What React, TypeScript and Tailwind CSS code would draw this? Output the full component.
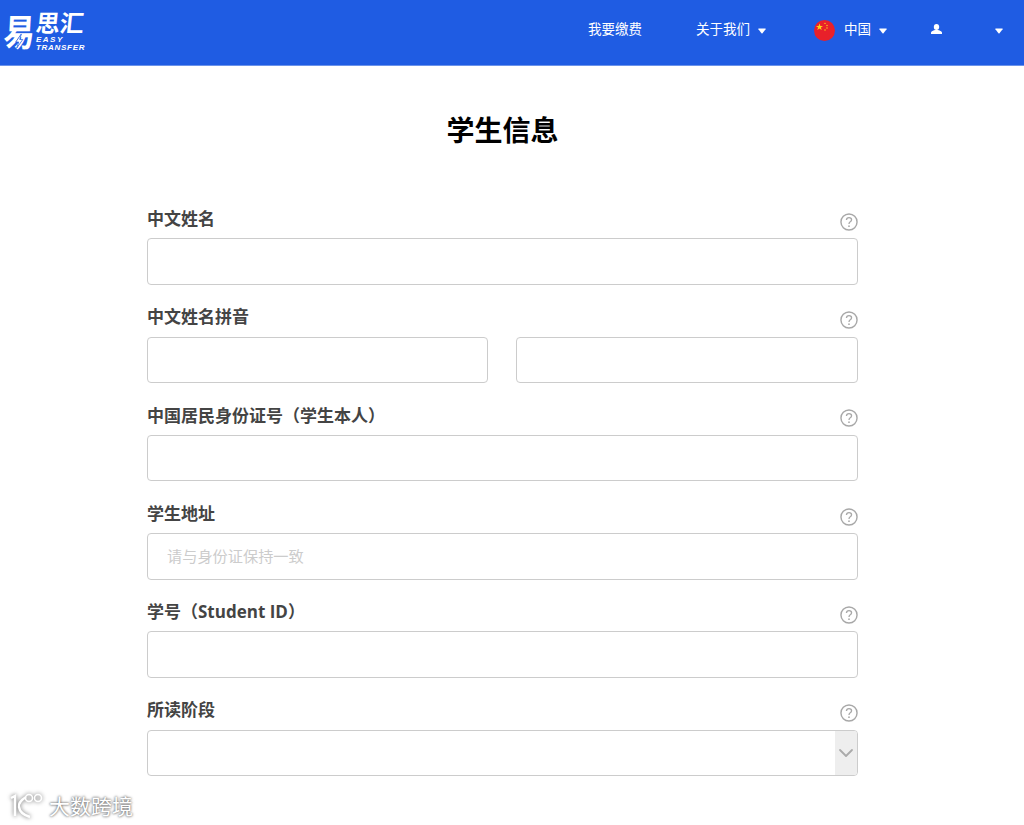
import React from "react";
import { ChevronDown } from "lucide-react";

const cjk = "font-['Open_Sans','Noto_Sans_CJK_SC','Noto_Sans',sans-serif]";

function Caret({ className = "" }: { className?: string }) {
  return (
    <svg width="8" height="6" viewBox="0 0 8 6" className={className}>
      <path d="M0.6 0.6 H7.4 Q7.9 0.6 7.6 1.2 L4.5 5.3 Q4 5.8 3.5 5.3 L0.4 1.2 Q0.1 0.6 0.6 0.6 Z" fill="#fff" />
    </svg>
  );
}

function Logo() {
  return (
    <div className="flex items-start ml-[5px] mt-[-2px] text-white font-bold">
      <div className="relative w-[31px] h-[38px] text-[31px] leading-[34px] origin-top skew-x-[-4deg] scale-y-[1.2]">
        易
        {/* bolt */}
        <svg width="10" height="12" viewBox="0 0 10 14" className="absolute left-[11px] top-[19px]">
          <path d="M7 0 L1 8 H4.5 L2.5 14 L9 5.5 H5.5 Z" fill="#fff" stroke="#1f5ce3" strokeWidth="0.8" />
        </svg>
      </div>
      <div className="flex flex-col">
        <div className="text-[24px] leading-[24px] skew-x-[-6deg]">思汇</div>
        <div className="italic font-['Liberation_Sans',sans-serif] text-[8px] leading-[8px] mt-[1.5px] tracking-[1.5px]">EASY</div>
        <div className="italic font-['Liberation_Sans',sans-serif] text-[8px] leading-[8px] tracking-[0.7px]">TRANSFER</div>
      </div>
    </div>
  );
}

function Flag() {
  return (
    <svg width="21" height="21" viewBox="0 0 21 21">
      <circle cx="10.5" cy="10.5" r="10.5" fill="#e8202a" />
      <path d="M5.5 3.5 L6.4 6 L9 6 L6.9 7.6 L7.7 10 L5.5 8.6 L3.3 10 L4.1 7.6 L2 6 L4.6 6 Z" fill="#fbd516" />
      <circle cx="11" cy="3.4" r="0.7" fill="#fbd516" />
      <circle cx="13" cy="5.5" r="0.7" fill="#fbd516" />
      <circle cx="13" cy="8" r="0.7" fill="#fbd516" />
      <circle cx="11" cy="10" r="0.7" fill="#fbd516" />
    </svg>
  );
}

function UserIcon() {
  return (
    <svg width="11" height="10" viewBox="0 0 11 10">
      <ellipse cx="5.5" cy="3" rx="2.7" ry="3" fill="#fff" />
      <path d="M0 10 V8.6 Q0 7.4 2.4 6.6 L4 6 H7 L8.6 6.6 Q11 7.4 11 8.6 V10 Z" fill="#fff" />
    </svg>
  );
}

function HelpIcon() {
  return (
    <svg width="18" height="18" viewBox="0 0 19 19" fill="none" stroke="#a8a8a8" className="mt-[2.4px]">
      <circle cx="9.5" cy="9.5" r="8.5" strokeWidth="1.5" />
      <path d="M6.8 7.4 Q6.9 4.8 9.5 4.8 Q12.2 4.8 12.2 7.1 Q12.2 8.4 10.8 9.2 Q9.5 10 9.5 11.6" strokeWidth="1.4" />
      <circle cx="9.5" cy="13.9" r="0.9" fill="#a8a8a8" stroke="none" />
    </svg>
  );
}

function Header() {
  return (
    <header className="h-[66px] bg-[#1f5ce3] border-b border-[#6b93ea] flex items-center text-white text-[13.5px] leading-[20px]">
      <Logo />
      <nav className="ml-auto flex items-center h-full pb-[7px]">
        <span className="mr-[54px]">我要缴费</span>
        <span>关于我们</span>
        <Caret className="ml-[8px] mt-[3px]" />
        <span className="ml-[48px] mt-[2px]"><Flag /></span>
        <span className="ml-[9px]">中国</span>
        <Caret className="ml-[8px] mt-[3px]" />
        <span className="ml-[44px]"><UserIcon /></span>
        <Caret className="ml-[53px] mt-[3px] mr-[21px]" />
      </nav>
    </header>
  );
}

function Field({ label, children }: { label: string; children: React.ReactNode }) {
  return (
    <div className="mb-[23.75px]">
      <div className="h-[28px] flex justify-between">
        <label className="text-[17px] leading-[20px] font-bold text-[#444] mt-[-1.4px]">{label}</label>
        <HelpIcon />
      </div>
      {children}
    </div>
  );
}

const inputCls =
  "block w-full h-[46.5px] bg-white border border-[#ccc] rounded-[4px] px-[19px] text-[15.2px] outline-none placeholder:text-[#ccc]";

export default function App() {
  return (
    <div className={`relative h-[825px] overflow-hidden bg-white ${cjk}`}>
      <Header />
      <main className="w-[1005px]">
        <h1 className="text-center text-[28px] leading-[40px] font-bold text-black mt-[43.5px] mb-[56.5px]">学生信息</h1>
        <form className="w-[711px] ml-[147px] pt-[4.45px]">
          <Field label="中文姓名">
            <input className={inputCls} />
          </Field>
          <Field label="中文姓名拼音">
            <div className="flex gap-[28px]">
              <input className={`${inputCls} !w-[341px]`} />
              <input className={`${inputCls} flex-1 min-w-0`} />
            </div>
          </Field>
          <Field label="中国居民身份证号（学生本人）">
            <input className={inputCls} />
          </Field>
          <Field label="学生地址">
            <input className={inputCls} placeholder="请与身份证保持一致" />
          </Field>
          <Field label="学号（Student ID）">
            <input className={inputCls} />
          </Field>
          <Field label="所读阶段">
            <div className={`${inputCls} !px-0 flex justify-end overflow-hidden`}>
              <div className="w-[22px] h-full bg-[#eee] flex items-center justify-center">
                <ChevronDown className="w-[24px] h-[24px] shrink-0 text-[#aaa]" strokeWidth={1.8} />
              </div>
            </div>
          </Field>
        </form>
      </main>
      {/* watermark */}
      <div className="absolute left-[8px] top-[792px] flex items-center text-white text-[21px] leading-[28px] [text-shadow:0_0_3px_#666,0_0_2px_#888]">
        <svg width="40" height="28" viewBox="0 0 40 28" fill="none" stroke="#fff" strokeWidth="2.4" className="drop-shadow-[0_0_2px_#666]">
          <path d="M3 6 L7 4 V24" />
          <path d="M18 5 Q10 10 11 15 Q12 22 22 25" />
          <circle cx="21" cy="6" r="3.5" strokeWidth="1.6" />
          <circle cx="30" cy="6" r="3.5" strokeWidth="1.6" />
        </svg>
        <span className="ml-[1px]">大数跨境</span>
      </div>
    </div>
  );
}
